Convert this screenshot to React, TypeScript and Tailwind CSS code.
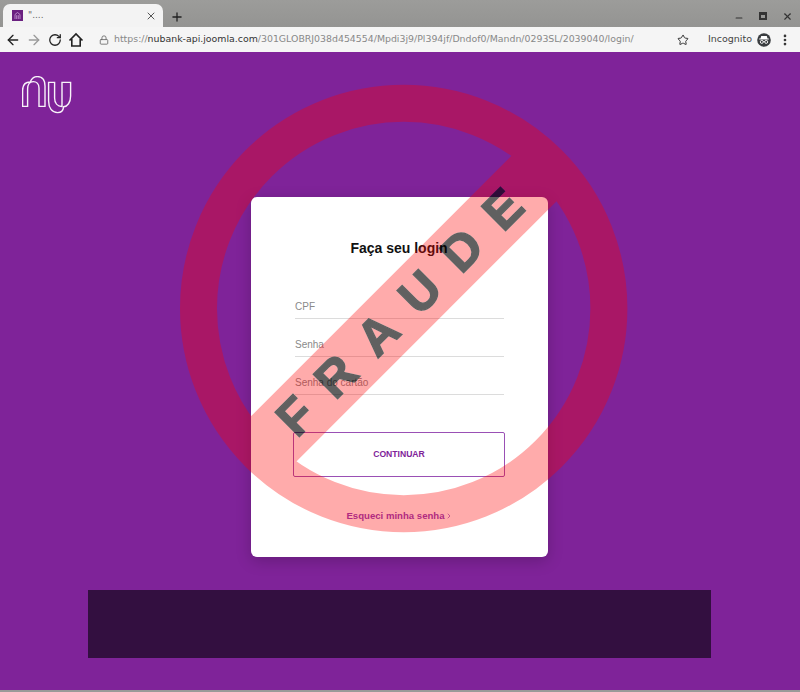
import { ArrowLeft, ArrowRight, RotateCw, Star, X, Plus, Minus, Lock, EllipsisVertical, ChevronRight } from "lucide-react";

const HomeIcon = () => (
  <svg width="16" height="16" viewBox="0 0 16 16" fill="none" stroke="#222" strokeWidth="1.6" className="shrink-0">
    <path d="M1.5 8.5 8 2l6.5 6.5M3.8 7v7h8.4V7" strokeLinejoin="miter" />
  </svg>
);

const IncognitoBadge = () => (
  <svg width="14" height="14" viewBox="0 0 14 14" className="shrink-0">
    <circle cx="7" cy="7" r="6.8" fill="#3a3d40" />
    <path d="M4.2 3h5.6l.7 2.6h1.3v.8H2.2v-.8h1.3z" fill="#fff" />
    <circle cx="4.8" cy="8.9" r="1.5" fill="none" stroke="#fff" strokeWidth="0.9" />
    <circle cx="9.2" cy="8.9" r="1.5" fill="none" stroke="#fff" strokeWidth="0.9" />
    <path d="M6.2 8.6h1.6" stroke="#fff" strokeWidth="0.8" />
  </svg>
);

const FaviconMark = () => (
  <svg width="11" height="11" viewBox="0 0 11 11" className="shrink-0">
    <rect width="11" height="11" fill="#6a2080" />
    <path d="M3 9V4.5L5.5 2.5 8 4.5V9M4.7 9V5.2M6.3 9V5.2" fill="none" stroke="#c9a0d6" strokeWidth="0.8" />
  </svg>
);

const NuLogo = () => (
  <svg width="50" height="38" viewBox="22 76 50 38" fill="none" stroke="#fff" strokeWidth="1.4" opacity="0.95">
    <path d="M22.6 106.4V90.5C22.6 85 25.6 82 30.2 82C31.6 78.6 34 76.6 37.4 76.6C42.4 76.6 45 80.4 45 86V106.4H39V88C39 84 36.4 81.6 33.2 81.6C29.8 81.6 27.6 84.6 27.6 89V106.4Z" />
    <path d="M48.6 82.4H54.6V98C54.6 103 57.4 106.4 62 106.6V82.4H70.6V96C70.6 102.6 67.4 106.4 63.6 106.8C63.2 110.4 60.6 112.6 57.6 112.6C52 112.6 48.6 108 48.6 101Z" />
  </svg>
);

const stampLetters = {
  x: 411.5,
  y: 325,
  transform: "rotate(-45 405 310)",
  textAnchor: "middle" as const,
  strokeWidth: 1.5,
  className: "font-bold",
  style: { fontFamily: '"Liberation Sans", Arial, sans-serif', fontSize: 50, letterSpacing: 23.3 },
};

// the red "no entry" stamp that lies over the whole page; the letters are cut out of the red
const FraudStamp = () => (
  <svg className="absolute inset-0 pointer-events-none" width="800" height="692" viewBox="0 0 800 692">
    <defs>
      <mask id="fraudeCut" maskUnits="userSpaceOnUse" x="0" y="0" width="800" height="692">
        <rect width="800" height="692" fill="#fff" />
        <text {...stampLetters} fill="#000" stroke="#000" aria-hidden="true">FRAUDE</text>
      </mask>
    </defs>
    <g mask="url(#fraudeCut)">
      <g opacity="0.33" stroke="#ff0000" fill="none">
        <circle cx="403.7" cy="308.5" r="205.2" strokeWidth="37" />
        <path d="M259 453.5L549 163.5" strokeWidth="64" />
      </g>
    </g>
    <text {...stampLetters} fill="#000" stroke="#000" opacity="0.62">FRAUDE</text>
  </svg>
);

const Field = ({ label }: { label: string }) => (
  <div className="h-[38px] border-b border-[#dcdcdc] flex items-end pb-[4px] text-[10px] leading-[14px] text-[#8a8a8a]">
    {label}
  </div>
);

export default function App() {
  return (
    <div className="relative w-[800px] h-[692px] overflow-hidden bg-[#9a9a98] flex flex-col" style={{ fontFamily: '"Liberation Sans", Arial, sans-serif' }}>
      {/* tab strip */}
      <div className="h-[27px] shrink-0 bg-gradient-to-b from-[#9c9c9a] to-[#949492] flex items-end pl-[3px]">
        <div className="w-[160px] h-[23px] bg-[#f3f3f3] rounded-t-[7px] flex items-center pl-[9px] pr-[6px]">
          <FaviconMark />
          <span className="ml-[5px] text-[9px] leading-none text-[#666]" style={{ fontFamily: '"DejaVu Sans", sans-serif' }}>"....</span>
          <X size={12} strokeWidth={1.8} className="ml-auto text-[#444]" />
        </div>
        <Plus size={14} strokeWidth={2.2} className="ml-[7px] mb-[3px] text-[#222]" />
        <div className="ml-auto flex items-center gap-[15px] pr-[7px] self-start pt-[9px] text-[#333]">
          <Minus size={10} strokeWidth={2.5} className="mt-[4px]" />
          <div className="w-[8px] h-[8px] border-2 border-t-[3px] border-[#333]" />
          <X size={11} strokeWidth={2.5} />
        </div>
      </div>
      {/* toolbar */}
      <div className="h-[25px] shrink-0 bg-[#f5f5f5] flex items-center pl-[5px] pr-[8px]" style={{ fontFamily: '"DejaVu Sans", sans-serif' }}>
        <ArrowLeft size={16} strokeWidth={2} className="shrink-0 text-[#222]" />
        <ArrowRight size={16} strokeWidth={2} className="shrink-0 ml-[5px] text-[#9a9a9a]" />
        <RotateCw size={14} strokeWidth={2.2} className="shrink-0 ml-[6px] text-[#222]" />
        <div className="ml-[6px] shrink-0"><HomeIcon /></div>
        <Lock size={10} strokeWidth={2} className="shrink-0 ml-[15px] text-[#666]" />
        <div className="ml-[5px] text-[9.4px] whitespace-nowrap text-[#888]">
          https://<span className="text-[#333]">nubank-api.joomla.com</span>/301GLOBRJ038d454554/Mpdi3j9/Pl394jf/Dndof0/Mandn/0293SL/2039040/login/
        </div>
        <Star size={12} strokeWidth={2} className="shrink-0 ml-auto text-[#333]" />
        <span className="ml-[19px] text-[9.5px] text-[#444]">Incognito</span>
        <div className="ml-[5px] shrink-0"><IncognitoBadge /></div>
        <EllipsisVertical size={14} strokeWidth={2.6} className="shrink-0 ml-[7px] text-[#333]" />
      </div>
      {/* page */}
      <main className="flex-1 mb-[2px] bg-[#7f2399] flex flex-col items-center">
        <div className="self-start ml-[22px] mt-[24px]">
          <NuLogo />
        </div>
        <div className="mt-[83px] mr-px w-[297px] h-[360px] bg-white rounded-[6px] shadow-[0_4px_16px_rgba(0,0,0,0.2)] px-[43px] flex flex-col">
          <h1 className="mt-[42px] pr-px text-center text-[14px] leading-[18px] font-bold text-[#111]">Faça seu login</h1>
          <div className="mt-[24px] px-px flex flex-col">
            <Field label="CPF" />
            <Field label="Senha" />
            <Field label="Senha do cartão" />
          </div>
          <button className="mt-[37px] -ml-px h-[45px] border border-[#9a50b5] rounded-[2px] text-[8.6px] font-bold text-[#7f2399]">CONTINUAR</button>
          <div className="mt-[33px] flex items-center justify-center text-[9.6px] leading-[12px] font-bold text-[#8a3fc0]">
            Esqueci minha senha
            <ChevronRight size={8} strokeWidth={2} />
          </div>
        </div>
        <div className="mt-[33px] mr-px w-[623px] h-[68px] bg-[#330f40]" />
      </main>
      <FraudStamp />
    </div>
  );
}
